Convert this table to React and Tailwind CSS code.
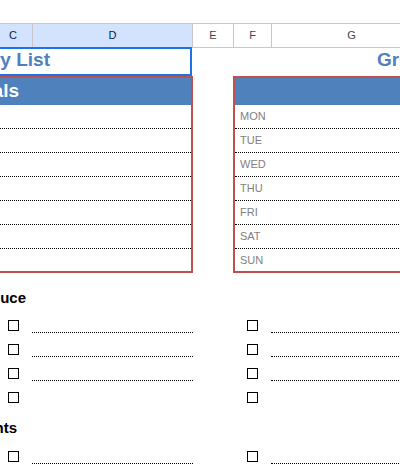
import React from 'react';

const days = ['MON', 'TUE', 'WED', 'THU', 'FRI', 'SAT', 'SUN'];

function Box() {
  return <div className="w-[11px] h-[11px] border border-black shrink-0 mt-[8px]" />;
}

function CheckRow({ lines = true }) {
  return (
    <div className="flex h-[24px]">
      <div className="ml-[8px] flex">
        <Box />
        <div className={`ml-[13px] w-[161px] h-[21px] ${lines ? 'border-b border-dotted border-black' : ''}`} />
      </div>
      <div className="ml-[54px] flex">
        <Box />
        <div className={`ml-[13px] w-[200px] h-[21px] shrink-0 ${lines ? 'border-b border-dotted border-black' : ''}`} />
      </div>
    </div>
  );
}

function Heading({ text, width }) {
  return (
    <div className={`flex justify-end whitespace-nowrap text-[15px] leading-[20px] font-bold text-black ${width}`}>
      {text}
    </div>
  );
}

export default function App() {
  return (
    <div className="relative w-[400px] h-[467px] overflow-hidden bg-white font-['Liberation_Sans',Arial,sans-serif]">
      {/* column headers */}
      <div className="mt-[23px] flex h-[25px] border-y border-[#c7c7c7] text-[11px] leading-[23px]">
        <div className="-ml-[6px] w-[39px] shrink-0 border-r border-[#c7c7c7] bg-[#d3e3fd] text-center text-[#041e49]">C</div>
        <div className="w-[160px] shrink-0 border-r border-[#c7c7c7] bg-[#d3e3fd] text-center text-[#041e49]">D</div>
        <div className="w-[41px] shrink-0 border-r border-[#c7c7c7] text-center text-[#444]">E</div>
        <div className="w-[38px] shrink-0 border-r border-[#c7c7c7] text-center text-[#444]">F</div>
        <div className="w-[160px] shrink-0 border-r border-[#c7c7c7] text-center text-[#444]">G</div>
      </div>

      {/* title row */}
      <div className="flex h-[28px] text-[19px] leading-[23px] font-bold text-[#4f81bd]">
        <div className="w-[50px] shrink-0 flex justify-end whitespace-nowrap">Grocery List</div>
        <div className="ml-[327px] whitespace-nowrap">Grocery List</div>
      </div>

      {/* selected cell outline */}
      <div className="absolute left-[-10px] top-[47px] w-[202px] h-[29px] border-2 border-[#1a73e8]" />

      {/* panels */}
      <div className="flex items-start">
        <div className="w-[193px] shrink-0 border-t-2 border-r-2 border-b-2 border-[#c0504d]">
          <div className="h-[27px] bg-[#4f81bd] flex">
            <div className="w-[19px] flex justify-end whitespace-nowrap text-white font-bold text-[19px] leading-[26px]">Meals</div>
          </div>
          {days.map((d, i) => (
            <div key={d} className={i < 6 ? 'h-[24px] border-b border-dotted border-black' : 'h-[22px]'} />
          ))}
        </div>
        <div className="ml-[40px] w-[300px] shrink-0 border-t-2 border-l-2 border-b-2 border-[#c0504d]">
          <div className="h-[27px] bg-[#4f81bd]" />
          {days.map((d, i) => (
            <div
              key={d}
              className={`flex items-center pl-[5px] text-[11px] text-[#7f7f7f] ${i < 6 ? 'h-[24px] border-b border-dotted border-black' : 'h-[22px]'}`}
            >
              {d}
            </div>
          ))}
        </div>
      </div>

      {/* checklists */}
      <div className="mt-[15px]">
        <Heading text="Produce" width="w-[26px]" />
        <div className="mt-[4px]">
          <CheckRow />
          <CheckRow />
          <CheckRow />
          <CheckRow lines={false} />
        </div>
        <div className="mt-[10px]">
          <Heading text="Condiments" width="w-[17px]" />
        </div>
        <div className="mt-[5px]">
          <CheckRow />
        </div>
      </div>
    </div>
  );
}
